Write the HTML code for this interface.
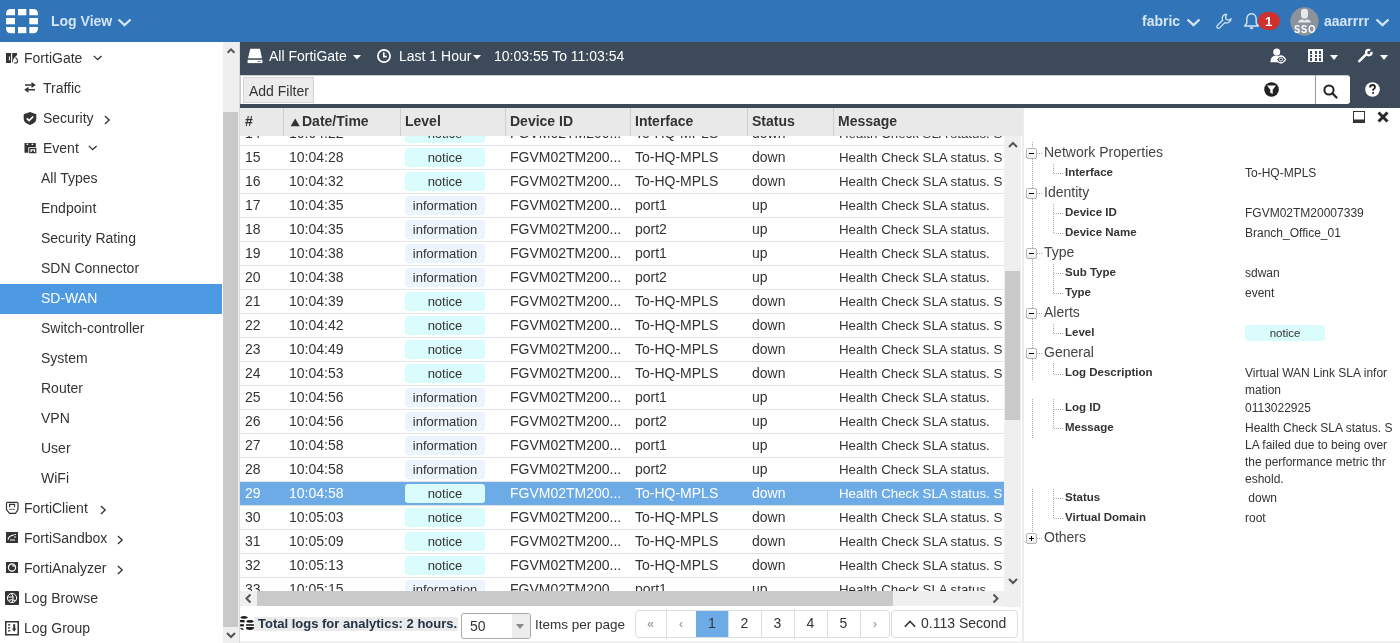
<!DOCTYPE html>
<html><head><meta charset="utf-8"><style>
html,body{margin:0;padding:0;width:1400px;height:643px;overflow:hidden;background:#fff;font-family:"Liberation Sans", sans-serif;-webkit-font-smoothing:antialiased;}
.t{will-change:transform;}
.r{position:absolute;}
.t{position:absolute;line-height:1;white-space:nowrap;font-family:"Liberation Sans", sans-serif;}
</style></head><body>
<div class="r" style="left:0px;top:0px;width:1400px;height:42px;background:#3174b7;"></div>
<svg class="r" style="left:6px;top:9px" width="33" height="25" viewBox="0 0 33 25">
<g fill="#fff">
<path d="M0 6.3 V5 Q0 0 5 0 H9 V6.3 Z"/>
<rect x="12" y="0" width="8.3" height="6.3"/>
<path d="M23.3 0 H27 Q32 0 32 5 V6.3 H23.3 Z"/>
<rect x="0" y="9" width="9" height="6.3"/>
<rect x="23.3" y="9" width="8.7" height="6.3"/>
<path d="M0 18 H9 V24.2 H5 Q0 24.2 0 19.2 Z"/>
<rect x="12" y="18" width="8.3" height="6.2"/>
<path d="M23.3 18 H32 V19.2 Q32 24.2 27 24.2 H23.3 Z"/>
</g></svg>
<div class="t" style="left:51px;top:14.15px;font-size:14px;color:#d3e4f5;font-weight:bold;">Log View</div>
<svg class="r" style="left:116.5px;top:18px" width="15" height="9" viewBox="0 0 15 9"><path d="M1.5 1.5 L7.5 7.2 L13.5 1.5" stroke="#d3e4f5" stroke-width="2.4" fill="none"/></svg>
<div class="t" style="left:1142px;top:14.15px;font-size:14px;color:#d3e4f5;font-weight:bold;">fabric</div>
<svg class="r" style="left:1185.5px;top:18px" width="15" height="9" viewBox="0 0 15 9"><path d="M1.5 1.5 L7.5 7.2 L13.5 1.5" stroke="#d3e4f5" stroke-width="2.4" fill="none"/></svg>
<svg class="r" style="left:1216px;top:13px" width="17" height="17" viewBox="0 0 17 17">
<path d="M10.5 1.2 A4.3 4.3 0 0 0 6.6 7.3 L1.3 12.6 A1.6 1.6 0 0 0 3.6 14.9 L8.9 9.6 A4.3 4.3 0 0 0 15 5.7 L12.6 7.2 L10.3 6.5 L9.6 4.2 Z" stroke="#d3e4f5" stroke-width="1.3" fill="none" stroke-linejoin="round"/></svg>
<svg class="r" style="left:1243px;top:12px" width="17" height="18" viewBox="0 0 17 18">
<path d="M8.5 1.8 C5.3 1.8 3.8 4.3 3.8 7.3 V11.3 L1.6 14 H15.4 L13.2 11.3 V7.3 C13.2 4.3 11.7 1.8 8.5 1.8 Z" stroke="#d3e4f5" stroke-width="1.4" fill="none" stroke-linejoin="round"/>
<path d="M6.5 15.3 A2 2 0 0 0 10.5 15.3 Z" fill="#d3e4f5"/></svg>
<div class="r" style="left:1258px;top:12px;width:22px;height:18px;background:#d0312f;border-radius:9px;"></div>
<div class="t" style="left:1265px;top:15.00px;font-size:13px;color:#fff;font-weight:bold;">1</div>
<svg class="r" style="left:1290px;top:7px" width="29" height="29" viewBox="0 0 29 29">
<circle cx="14.5" cy="14.5" r="14.2" fill="#8b939c"/>
<path d="M11 4.5 Q11 1.8 14.5 1.8 Q18 1.8 18 4.5 V8 Q18 11.8 14.5 11.8 Q11 11.8 11 8 Z" fill="#e6e8ea"/>
<path d="M8 15.5 Q8.5 13 12 12.3 L14.5 13.5 L17 12.3 Q20.5 13 21 15.5 Z" fill="#e6e8ea"/>
</svg>
<div class="t" style="left:1293.8px;top:23.57px;font-size:11.5px;color:#fff;font-weight:bold;letter-spacing:1.2px;transform:scaleX(0.8);transform-origin:0 0;">SSO</div>
<div class="t" style="left:1324px;top:14.15px;font-size:14px;color:#d3e4f5;font-weight:bold;">aaarrrr</div>
<svg class="r" style="left:1374.5px;top:18px" width="15" height="9" viewBox="0 0 15 9"><path d="M1.5 1.5 L7.5 7.2 L13.5 1.5" stroke="#d3e4f5" stroke-width="2.4" fill="none"/></svg>
<div class="r" style="left:0px;top:42px;width:223px;height:601px;background:#fff;"></div>
<div class="r" style="left:223px;top:42px;width:16px;height:601px;background:#efefef;"></div>
<div class="r" style="left:223px;top:112px;width:15px;height:515px;background:#c9c9c9;"></div>
<svg class="r" style="left:225px;top:46px" width="12" height="9" viewBox="0 0 12 9"><path d="M2.6 6.8 L6 3.4 L9.4 6.8" stroke="#555" stroke-width="2" fill="none"/></svg>
<svg class="r" style="left:225px;top:631px" width="12" height="9" viewBox="0 0 12 9"><path d="M2 2 L6 6 L10 2" stroke="#555" stroke-width="2" fill="none"/></svg>
<div class="r" style="left:0px;top:284px;width:222px;height:30px;background:#4d9ae2;"></div>
<div class="t" style="left:24px;top:51.00px;font-size:14px;color:#333;">FortiGate</div>
<svg class="r" style="left:93px;top:54.55px" width="10" height="6" viewBox="0 0 10 6"><path d="M0.8 0.9 L4.6 4.6 L8.6 0.9" stroke="#333" stroke-width="1.3" fill="none"/></svg>
<div class="t" style="left:42.5px;top:81.00px;font-size:14px;color:#333;">Traffic</div>
<div class="t" style="left:42.5px;top:111.00px;font-size:14px;color:#333;">Security</div>
<svg class="r" style="left:103.8px;top:114.55px" width="7" height="10" viewBox="0 0 7 10"><path d="M0.9 1.1 L5.2 5 L0.9 8.9" stroke="#333" stroke-width="1.3" fill="none"/></svg>
<div class="t" style="left:42.5px;top:141.00px;font-size:14px;color:#333;">Event</div>
<svg class="r" style="left:88px;top:144.54999999999998px" width="10" height="6" viewBox="0 0 10 6"><path d="M0.8 0.9 L4.6 4.6 L8.6 0.9" stroke="#333" stroke-width="1.3" fill="none"/></svg>
<div class="t" style="left:41px;top:171.00px;font-size:14px;color:#333;">All Types</div>
<div class="t" style="left:41px;top:201.00px;font-size:14px;color:#333;">Endpoint</div>
<div class="t" style="left:41px;top:231.00px;font-size:14px;color:#333;">Security Rating</div>
<div class="t" style="left:41px;top:261.00px;font-size:14px;color:#333;">SDN Connector</div>
<div class="t" style="left:41px;top:291.00px;font-size:14px;color:#fff;">SD-WAN</div>
<div class="t" style="left:41px;top:321.00px;font-size:14px;color:#333;">Switch-controller</div>
<div class="t" style="left:41px;top:351.00px;font-size:14px;color:#333;">System</div>
<div class="t" style="left:41px;top:381.00px;font-size:14px;color:#333;">Router</div>
<div class="t" style="left:41px;top:411.00px;font-size:14px;color:#333;">VPN</div>
<div class="t" style="left:41px;top:441.00px;font-size:14px;color:#333;">User</div>
<div class="t" style="left:41px;top:471.00px;font-size:14px;color:#333;">WiFi</div>
<div class="t" style="left:24.3px;top:501.00px;font-size:14px;color:#333;">FortiClient</div>
<svg class="r" style="left:100.3px;top:504.55px" width="7" height="10" viewBox="0 0 7 10"><path d="M0.9 1.1 L5.2 5 L0.9 8.9" stroke="#333" stroke-width="1.3" fill="none"/></svg>
<div class="t" style="left:24.3px;top:531.00px;font-size:14px;color:#333;">FortiSandbox</div>
<svg class="r" style="left:116.89999999999999px;top:534.5500000000001px" width="7" height="10" viewBox="0 0 7 10"><path d="M0.9 1.1 L5.2 5 L0.9 8.9" stroke="#333" stroke-width="1.3" fill="none"/></svg>
<div class="t" style="left:24.3px;top:561.00px;font-size:14px;color:#333;">FortiAnalyzer</div>
<svg class="r" style="left:117.3px;top:564.5500000000001px" width="7" height="10" viewBox="0 0 7 10"><path d="M0.9 1.1 L5.2 5 L0.9 8.9" stroke="#333" stroke-width="1.3" fill="none"/></svg>
<div class="t" style="left:24.3px;top:591.00px;font-size:14px;color:#333;">Log Browse</div>
<div class="t" style="left:24.3px;top:621.00px;font-size:14px;color:#333;">Log Group</div>
<svg class="r" style="left:5px;top:52px" width="15" height="12" viewBox="0 0 15 12"><path d="M1 1 H6 V11 H1 Z M3.9 4.4 V8.2 H5 V4.4 Z" fill="#333" fill-rule="evenodd"/><path d="M7.2 1 H12 V3 L9.5 5.5 Q7.8 7.5 8.2 9.5 L7.2 11 Z" fill="#333"/><path d="M10.5 5.5 Q13 7.5 12.5 10 Q11 11.5 9 10.8" stroke="#333" stroke-width="1.1" fill="none"/></svg>
<svg class="r" style="left:24px;top:82px" width="12" height="11" viewBox="0 0 12 11"><path d="M1 3 H10 M7.5 0.8 L10.5 3 L7.5 5.2" stroke="#333" stroke-width="1.5" fill="none"/><path d="M11 7.8 H2 M4.5 5.6 L1.5 7.8 L4.5 10" stroke="#333" stroke-width="1.5" fill="none"/></svg>
<svg class="r" style="left:23px;top:112px" width="14" height="13" viewBox="0 0 14 13"><path d="M7 0 L13.3 2.3 V7 Q13.3 10.8 7 13 Q0.7 10.8 0.7 7 V2.3 Z" fill="#333"/><path d="M3.8 6.3 L6.1 8.6 L10.2 4.5" stroke="#fff" stroke-width="1.7" fill="none"/></svg>
<svg class="r" style="left:24px;top:142px" width="13" height="12" viewBox="0 0 13 12"><path d="M0.5 1 H11.8 V5.3 H4.3 V10.8 H0.5 Z" fill="#333"/><rect x="2.6" y="1.6" width="1.6" height="1.4" fill="#fff"/><rect x="7.6" y="1.6" width="1.6" height="1.4" fill="#fff"/><rect x="5.8" y="6.6" width="5.9" height="4" fill="none" stroke="#333" stroke-width="1.3"/><rect x="7.8" y="8.4" width="2" height="1.6" fill="#333"/></svg>
<svg class="r" style="left:5px;top:501px" width="14" height="14" viewBox="0 0 14 14"><path d="M2 1.3 H12 L13 2.3 V8.5 L10.5 12.3 H4.5 L1.5 8.5 V2.3 Z" fill="none" stroke="#333" stroke-width="1.2"/><path d="M4.6 6.2 V3.4 H9.5 V6.2" stroke="#333" stroke-width="1.2" fill="none"/><path d="M4.3 8.4 H9.8" stroke="#333" stroke-width="1.1" stroke-dasharray="1.2 0.8"/></svg>
<svg class="r" style="left:6px;top:532px" width="12" height="11" viewBox="0 0 12 11"><rect x="0" y="0" width="12" height="11" fill="#333"/><path d="M2 7.7 Q3 3.5 8 3 M8.5 2.5 H10 M4 8 H9 M8 5 H10" stroke="#fff" stroke-width="1.2" fill="none"/></svg>
<svg class="r" style="left:6px;top:562px" width="12" height="11" viewBox="0 0 12 11"><rect x="0" y="0" width="12" height="11" fill="#333"/><circle cx="6" cy="5.5" r="3.6" stroke="#fff" stroke-width="1.2" fill="none"/><path d="M6 4 Q8 3.3 8.4 4.8" stroke="#fff" stroke-width="1.1" fill="none"/></svg>
<svg class="r" style="left:5px;top:591px" width="14" height="14" viewBox="0 0 14 14"><rect x="0" y="0" width="14" height="14" rx="1" fill="#333"/><circle cx="7" cy="7" r="4.6" stroke="#fff" stroke-width="1" fill="none"/><path d="M2.6 6 H8.5 M3.5 9.3 Q6 8 10.5 9.5 M6 2.7 Q9.5 5 7 11.4" stroke="#fff" stroke-width="1" fill="none"/></svg>
<svg class="r" style="left:5px;top:621px" width="14" height="15" viewBox="0 0 14 15"><rect x="0.75" y="0.75" width="12.5" height="13" fill="none" stroke="#333" stroke-width="1.5"/><path d="M3 3.8 H5.3 M3 6.8 H5.3 M3 9.8 H5.3" stroke="#333" stroke-width="1.2"/><path d="M8.2 3.3 H10.2 V7.5 H11.5 L9.2 10.8 L6.9 7.5 H8.2 Z" fill="#333"/></svg>
<div class="r" style="left:240px;top:42px;width:1160px;height:66px;background:#3c4a5a;"></div>
<svg class="r" style="left:247px;top:48px" width="16" height="16" viewBox="0 0 16 16">
<path d="M3.3 0.8 H13 L15 10.3 H1 Z" fill="#fff"/><rect x="0.6" y="11.8" width="14.8" height="3.3" fill="#fff"/><rect x="10.5" y="12.9" width="3.2" height="1" fill="#6a7a9a"/></svg>
<div class="t" style="left:269px;top:49.15px;font-size:14px;color:#fff;">All FortiGate</div>
<svg class="r" style="left:353px;top:55px" width="8" height="5" viewBox="0 0 8 5"><path d="M0 0 H8 L4 4.5 Z" fill="#fff"/></svg>
<svg class="r" style="left:377px;top:49px" width="14" height="14" viewBox="0 0 14 14">
<circle cx="7" cy="7" r="6.1" stroke="#fff" stroke-width="1.7" fill="none"/><path d="M6.8 3.3 V7.6 H9.8" stroke="#fff" stroke-width="1.6" fill="none"/></svg>
<div class="t" style="left:398.5px;top:49.15px;font-size:14px;color:#fff;">Last 1 Hour</div>
<svg class="r" style="left:473px;top:55px" width="8" height="5" viewBox="0 0 8 5"><path d="M0 0 H8 L4 4.5 Z" fill="#fff"/></svg>
<div class="t" style="left:494px;top:49.15px;font-size:14px;color:#fff;">10:03:55 To 11:03:54</div>
<svg class="r" style="left:1270px;top:48px" width="17" height="17" viewBox="0 0 17 17">
<circle cx="6.7" cy="3.9" r="3.5" fill="#fff"/><path d="M0.3 14.3 Q0.3 8 6 7.6 Q8 7.6 9.3 8.4 L6 11.5 L8.3 14.3 Z" fill="#fff"/>
<path d="M6.4 11.5 Q8.5 8 11 8 Q13.5 8 15.6 11.5 Q13.5 15 11 15 Q8.5 15 6.4 11.5 Z" fill="#3c4a5a" stroke="#fff" stroke-width="1.3"/><circle cx="11" cy="11.5" r="1.6" fill="none" stroke="#fff" stroke-width="0.9"/></svg>
<svg class="r" style="left:1308px;top:49px" width="15" height="13" viewBox="0 0 15 13" shape-rendering="crispEdges">
<rect x="0" y="0" width="15" height="13" fill="#fff"/><g fill="#3c4a5a"><rect x="2" y="2" width="2" height="3"/><rect x="7" y="2" width="2" height="3"/><rect x="11" y="2" width="2" height="3"/><rect x="2" y="6" width="2" height="2"/><rect x="7" y="6" width="2" height="2"/><rect x="11" y="6" width="2" height="2"/><rect x="2" y="9" width="2" height="3"/><rect x="7" y="9" width="2" height="3"/><rect x="11" y="9" width="2" height="3"/></g></svg>
<svg class="r" style="left:1330px;top:55px" width="8" height="5" viewBox="0 0 8 5"><path d="M0 0 H8 L4 5 Z" fill="#fff"/></svg>
<svg class="r" style="left:1357px;top:48px" width="17" height="17" viewBox="0 0 17 17">
<path d="M2.3 13.2 L8.8 6.7" stroke="#fff" stroke-width="2.6" stroke-linecap="round"/>
<circle cx="11.8" cy="4.6" r="2.7" stroke="#fff" stroke-width="2.3" fill="none"/>
<path d="M11.6 4.8 L14.2 0.2 L17 3 Z" fill="#3c4a5a"/></svg>
<svg class="r" style="left:1380px;top:55px" width="8" height="5" viewBox="0 0 8 5"><path d="M0 0 H8 L4 5 Z" fill="#fff"/></svg>
<div class="r" style="left:240px;top:75px;width:1110px;height:29px;background:#fff;border:1px solid #c9ccd0;border-right:none;border-bottom:none;box-sizing:border-box;border-radius:0 3px 3px 0"></div>
<div class="r" style="left:1315px;top:75px;width:1px;height:29px;background:#999;"></div>
<div class="r" style="left:243px;top:77px;width:69px;height:24px;background:#ececec;border:1px solid #d4d4d4;"></div>
<div class="t" style="left:248.5px;top:84.15px;font-size:14px;color:#333;">Add Filter</div>
<svg class="r" style="left:1264px;top:82px" width="15" height="15" viewBox="0 0 15 15">
<circle cx="7.5" cy="7.5" r="7.3" fill="#222"/><path d="M3 3.5 H12 L8.7 7.8 V12 L6.3 10.8 V7.8 Z" fill="#fff"/></svg>
<svg class="r" style="left:1323px;top:84px" width="15" height="15" viewBox="0 0 15 15">
<circle cx="6" cy="6" r="4.6" stroke="#222" stroke-width="2" fill="none"/><path d="M9.3 9.3 L13.5 13.5" stroke="#222" stroke-width="2.2" stroke-linecap="round"/></svg>
<svg class="r" style="left:1365px;top:82px" width="15" height="15" viewBox="0 0 15 15">
<circle cx="7.5" cy="7.5" r="7.3" fill="#fff"/><path d="M5 5.5 Q5 3 7.5 3 Q10 3 10 5.3 Q10 6.8 8.2 7.5 V8.8" stroke="#222" stroke-width="1.8" fill="none"/><rect x="7.2" y="10" width="1.8" height="1.8" fill="#222"/></svg>
<div class="r" style="left:240px;top:108px;width:782px;height:535px;background:#fff;"></div>
<div class="r" style="left:239px;top:42px;width:1px;height:601px;background:#dcdcdc;"></div>
<div class="r" style="left:240px;top:136px;width:764px;height:455px;overflow:hidden">
<div class="r" style="left:0;top:-14px;width:764px;height:24px;background:#fff;border-bottom:1px solid #e3e3e3;box-sizing:border-box"></div>
<div class="t" style="left:4.5px;top:-9.85px;font-size:14px;color:#333">14</div>
<div class="t" style="left:48.5px;top:-9.85px;font-size:14px;color:#333">10:04:22</div>
<div class="r" style="left:165px;top:-12px;width:80px;height:19px;background:#dbfcfc;border-radius:3px"></div>
<div class="t" style="left:165px;width:80px;text-align:center;top:-9.00px;font-size:13px;color:#333">notice</div>
<div class="t" style="left:270px;top:-9.85px;font-size:14px;color:#333">FGVM02TM200...</div>
<div class="t" style="left:395px;top:-9.85px;font-size:14px;color:#333">To-HQ-MPLS</div>
<div class="t" style="left:512px;top:-9.85px;font-size:14px;color:#333">down</div>
<div class="t" style="left:598.5px;top:-9.26px;font-size:13.3px;color:#333">Health Check SLA status. S</div>
<div class="r" style="left:0;top:10px;width:764px;height:24px;background:#fff;border-bottom:1px solid #e3e3e3;box-sizing:border-box"></div>
<div class="t" style="left:4.5px;top:14.15px;font-size:14px;color:#333">15</div>
<div class="t" style="left:48.5px;top:14.15px;font-size:14px;color:#333">10:04:28</div>
<div class="r" style="left:165px;top:12px;width:80px;height:19px;background:#dbfcfc;border-radius:3px"></div>
<div class="t" style="left:165px;width:80px;text-align:center;top:15.00px;font-size:13px;color:#333">notice</div>
<div class="t" style="left:270px;top:14.15px;font-size:14px;color:#333">FGVM02TM200...</div>
<div class="t" style="left:395px;top:14.15px;font-size:14px;color:#333">To-HQ-MPLS</div>
<div class="t" style="left:512px;top:14.15px;font-size:14px;color:#333">down</div>
<div class="t" style="left:598.5px;top:14.74px;font-size:13.3px;color:#333">Health Check SLA status. S</div>
<div class="r" style="left:0;top:34px;width:764px;height:24px;background:#fff;border-bottom:1px solid #e3e3e3;box-sizing:border-box"></div>
<div class="t" style="left:4.5px;top:38.15px;font-size:14px;color:#333">16</div>
<div class="t" style="left:48.5px;top:38.15px;font-size:14px;color:#333">10:04:32</div>
<div class="r" style="left:165px;top:36px;width:80px;height:19px;background:#dbfcfc;border-radius:3px"></div>
<div class="t" style="left:165px;width:80px;text-align:center;top:39.00px;font-size:13px;color:#333">notice</div>
<div class="t" style="left:270px;top:38.15px;font-size:14px;color:#333">FGVM02TM200...</div>
<div class="t" style="left:395px;top:38.15px;font-size:14px;color:#333">To-HQ-MPLS</div>
<div class="t" style="left:512px;top:38.15px;font-size:14px;color:#333">down</div>
<div class="t" style="left:598.5px;top:38.74px;font-size:13.3px;color:#333">Health Check SLA status. S</div>
<div class="r" style="left:0;top:58px;width:764px;height:24px;background:#fff;border-bottom:1px solid #e3e3e3;box-sizing:border-box"></div>
<div class="t" style="left:4.5px;top:62.15px;font-size:14px;color:#333">17</div>
<div class="t" style="left:48.5px;top:62.15px;font-size:14px;color:#333">10:04:35</div>
<div class="r" style="left:165px;top:60px;width:80px;height:19px;background:#ecf4fd;border-radius:3px"></div>
<div class="t" style="left:165px;width:80px;text-align:center;top:63.00px;font-size:13px;color:#333">information</div>
<div class="t" style="left:270px;top:62.15px;font-size:14px;color:#333">FGVM02TM200...</div>
<div class="t" style="left:395px;top:62.15px;font-size:14px;color:#333">port1</div>
<div class="t" style="left:512px;top:62.15px;font-size:14px;color:#333">up</div>
<div class="t" style="left:598.5px;top:62.74px;font-size:13.3px;color:#333">Health Check SLA status.</div>
<div class="r" style="left:0;top:82px;width:764px;height:24px;background:#fff;border-bottom:1px solid #e3e3e3;box-sizing:border-box"></div>
<div class="t" style="left:4.5px;top:86.15px;font-size:14px;color:#333">18</div>
<div class="t" style="left:48.5px;top:86.15px;font-size:14px;color:#333">10:04:35</div>
<div class="r" style="left:165px;top:84px;width:80px;height:19px;background:#ecf4fd;border-radius:3px"></div>
<div class="t" style="left:165px;width:80px;text-align:center;top:87.00px;font-size:13px;color:#333">information</div>
<div class="t" style="left:270px;top:86.15px;font-size:14px;color:#333">FGVM02TM200...</div>
<div class="t" style="left:395px;top:86.15px;font-size:14px;color:#333">port2</div>
<div class="t" style="left:512px;top:86.15px;font-size:14px;color:#333">up</div>
<div class="t" style="left:598.5px;top:86.74px;font-size:13.3px;color:#333">Health Check SLA status.</div>
<div class="r" style="left:0;top:106px;width:764px;height:24px;background:#fff;border-bottom:1px solid #e3e3e3;box-sizing:border-box"></div>
<div class="t" style="left:4.5px;top:110.15px;font-size:14px;color:#333">19</div>
<div class="t" style="left:48.5px;top:110.15px;font-size:14px;color:#333">10:04:38</div>
<div class="r" style="left:165px;top:108px;width:80px;height:19px;background:#ecf4fd;border-radius:3px"></div>
<div class="t" style="left:165px;width:80px;text-align:center;top:111.00px;font-size:13px;color:#333">information</div>
<div class="t" style="left:270px;top:110.15px;font-size:14px;color:#333">FGVM02TM200...</div>
<div class="t" style="left:395px;top:110.15px;font-size:14px;color:#333">port1</div>
<div class="t" style="left:512px;top:110.15px;font-size:14px;color:#333">up</div>
<div class="t" style="left:598.5px;top:110.74px;font-size:13.3px;color:#333">Health Check SLA status.</div>
<div class="r" style="left:0;top:130px;width:764px;height:24px;background:#fff;border-bottom:1px solid #e3e3e3;box-sizing:border-box"></div>
<div class="t" style="left:4.5px;top:134.15px;font-size:14px;color:#333">20</div>
<div class="t" style="left:48.5px;top:134.15px;font-size:14px;color:#333">10:04:38</div>
<div class="r" style="left:165px;top:132px;width:80px;height:19px;background:#ecf4fd;border-radius:3px"></div>
<div class="t" style="left:165px;width:80px;text-align:center;top:135.00px;font-size:13px;color:#333">information</div>
<div class="t" style="left:270px;top:134.15px;font-size:14px;color:#333">FGVM02TM200...</div>
<div class="t" style="left:395px;top:134.15px;font-size:14px;color:#333">port2</div>
<div class="t" style="left:512px;top:134.15px;font-size:14px;color:#333">up</div>
<div class="t" style="left:598.5px;top:134.74px;font-size:13.3px;color:#333">Health Check SLA status.</div>
<div class="r" style="left:0;top:154px;width:764px;height:24px;background:#fff;border-bottom:1px solid #e3e3e3;box-sizing:border-box"></div>
<div class="t" style="left:4.5px;top:158.15px;font-size:14px;color:#333">21</div>
<div class="t" style="left:48.5px;top:158.15px;font-size:14px;color:#333">10:04:39</div>
<div class="r" style="left:165px;top:156px;width:80px;height:19px;background:#dbfcfc;border-radius:3px"></div>
<div class="t" style="left:165px;width:80px;text-align:center;top:159.00px;font-size:13px;color:#333">notice</div>
<div class="t" style="left:270px;top:158.15px;font-size:14px;color:#333">FGVM02TM200...</div>
<div class="t" style="left:395px;top:158.15px;font-size:14px;color:#333">To-HQ-MPLS</div>
<div class="t" style="left:512px;top:158.15px;font-size:14px;color:#333">down</div>
<div class="t" style="left:598.5px;top:158.74px;font-size:13.3px;color:#333">Health Check SLA status. S</div>
<div class="r" style="left:0;top:178px;width:764px;height:24px;background:#fff;border-bottom:1px solid #e3e3e3;box-sizing:border-box"></div>
<div class="t" style="left:4.5px;top:182.15px;font-size:14px;color:#333">22</div>
<div class="t" style="left:48.5px;top:182.15px;font-size:14px;color:#333">10:04:42</div>
<div class="r" style="left:165px;top:180px;width:80px;height:19px;background:#dbfcfc;border-radius:3px"></div>
<div class="t" style="left:165px;width:80px;text-align:center;top:183.00px;font-size:13px;color:#333">notice</div>
<div class="t" style="left:270px;top:182.15px;font-size:14px;color:#333">FGVM02TM200...</div>
<div class="t" style="left:395px;top:182.15px;font-size:14px;color:#333">To-HQ-MPLS</div>
<div class="t" style="left:512px;top:182.15px;font-size:14px;color:#333">down</div>
<div class="t" style="left:598.5px;top:182.74px;font-size:13.3px;color:#333">Health Check SLA status. S</div>
<div class="r" style="left:0;top:202px;width:764px;height:24px;background:#fff;border-bottom:1px solid #e3e3e3;box-sizing:border-box"></div>
<div class="t" style="left:4.5px;top:206.15px;font-size:14px;color:#333">23</div>
<div class="t" style="left:48.5px;top:206.15px;font-size:14px;color:#333">10:04:49</div>
<div class="r" style="left:165px;top:204px;width:80px;height:19px;background:#dbfcfc;border-radius:3px"></div>
<div class="t" style="left:165px;width:80px;text-align:center;top:207.00px;font-size:13px;color:#333">notice</div>
<div class="t" style="left:270px;top:206.15px;font-size:14px;color:#333">FGVM02TM200...</div>
<div class="t" style="left:395px;top:206.15px;font-size:14px;color:#333">To-HQ-MPLS</div>
<div class="t" style="left:512px;top:206.15px;font-size:14px;color:#333">down</div>
<div class="t" style="left:598.5px;top:206.74px;font-size:13.3px;color:#333">Health Check SLA status. S</div>
<div class="r" style="left:0;top:226px;width:764px;height:24px;background:#fff;border-bottom:1px solid #e3e3e3;box-sizing:border-box"></div>
<div class="t" style="left:4.5px;top:230.15px;font-size:14px;color:#333">24</div>
<div class="t" style="left:48.5px;top:230.15px;font-size:14px;color:#333">10:04:53</div>
<div class="r" style="left:165px;top:228px;width:80px;height:19px;background:#dbfcfc;border-radius:3px"></div>
<div class="t" style="left:165px;width:80px;text-align:center;top:231.00px;font-size:13px;color:#333">notice</div>
<div class="t" style="left:270px;top:230.15px;font-size:14px;color:#333">FGVM02TM200...</div>
<div class="t" style="left:395px;top:230.15px;font-size:14px;color:#333">To-HQ-MPLS</div>
<div class="t" style="left:512px;top:230.15px;font-size:14px;color:#333">down</div>
<div class="t" style="left:598.5px;top:230.74px;font-size:13.3px;color:#333">Health Check SLA status. S</div>
<div class="r" style="left:0;top:250px;width:764px;height:24px;background:#fff;border-bottom:1px solid #e3e3e3;box-sizing:border-box"></div>
<div class="t" style="left:4.5px;top:254.15px;font-size:14px;color:#333">25</div>
<div class="t" style="left:48.5px;top:254.15px;font-size:14px;color:#333">10:04:56</div>
<div class="r" style="left:165px;top:252px;width:80px;height:19px;background:#ecf4fd;border-radius:3px"></div>
<div class="t" style="left:165px;width:80px;text-align:center;top:255.00px;font-size:13px;color:#333">information</div>
<div class="t" style="left:270px;top:254.15px;font-size:14px;color:#333">FGVM02TM200...</div>
<div class="t" style="left:395px;top:254.15px;font-size:14px;color:#333">port1</div>
<div class="t" style="left:512px;top:254.15px;font-size:14px;color:#333">up</div>
<div class="t" style="left:598.5px;top:254.74px;font-size:13.3px;color:#333">Health Check SLA status.</div>
<div class="r" style="left:0;top:274px;width:764px;height:24px;background:#fff;border-bottom:1px solid #e3e3e3;box-sizing:border-box"></div>
<div class="t" style="left:4.5px;top:278.15px;font-size:14px;color:#333">26</div>
<div class="t" style="left:48.5px;top:278.15px;font-size:14px;color:#333">10:04:56</div>
<div class="r" style="left:165px;top:276px;width:80px;height:19px;background:#ecf4fd;border-radius:3px"></div>
<div class="t" style="left:165px;width:80px;text-align:center;top:279.00px;font-size:13px;color:#333">information</div>
<div class="t" style="left:270px;top:278.15px;font-size:14px;color:#333">FGVM02TM200...</div>
<div class="t" style="left:395px;top:278.15px;font-size:14px;color:#333">port2</div>
<div class="t" style="left:512px;top:278.15px;font-size:14px;color:#333">up</div>
<div class="t" style="left:598.5px;top:278.74px;font-size:13.3px;color:#333">Health Check SLA status.</div>
<div class="r" style="left:0;top:298px;width:764px;height:24px;background:#fff;border-bottom:1px solid #e3e3e3;box-sizing:border-box"></div>
<div class="t" style="left:4.5px;top:302.15px;font-size:14px;color:#333">27</div>
<div class="t" style="left:48.5px;top:302.15px;font-size:14px;color:#333">10:04:58</div>
<div class="r" style="left:165px;top:300px;width:80px;height:19px;background:#ecf4fd;border-radius:3px"></div>
<div class="t" style="left:165px;width:80px;text-align:center;top:303.00px;font-size:13px;color:#333">information</div>
<div class="t" style="left:270px;top:302.15px;font-size:14px;color:#333">FGVM02TM200...</div>
<div class="t" style="left:395px;top:302.15px;font-size:14px;color:#333">port1</div>
<div class="t" style="left:512px;top:302.15px;font-size:14px;color:#333">up</div>
<div class="t" style="left:598.5px;top:302.74px;font-size:13.3px;color:#333">Health Check SLA status.</div>
<div class="r" style="left:0;top:322px;width:764px;height:24px;background:#fff;border-bottom:1px solid #e3e3e3;box-sizing:border-box"></div>
<div class="t" style="left:4.5px;top:326.15px;font-size:14px;color:#333">28</div>
<div class="t" style="left:48.5px;top:326.15px;font-size:14px;color:#333">10:04:58</div>
<div class="r" style="left:165px;top:324px;width:80px;height:19px;background:#ecf4fd;border-radius:3px"></div>
<div class="t" style="left:165px;width:80px;text-align:center;top:327.00px;font-size:13px;color:#333">information</div>
<div class="t" style="left:270px;top:326.15px;font-size:14px;color:#333">FGVM02TM200...</div>
<div class="t" style="left:395px;top:326.15px;font-size:14px;color:#333">port2</div>
<div class="t" style="left:512px;top:326.15px;font-size:14px;color:#333">up</div>
<div class="t" style="left:598.5px;top:326.74px;font-size:13.3px;color:#333">Health Check SLA status.</div>
<div class="r" style="left:0;top:346px;width:764px;height:24px;background:#6cabe6;border-bottom:1px solid #e3e3e3;box-sizing:border-box"></div>
<div class="t" style="left:4.5px;top:350.15px;font-size:14px;color:#fff">29</div>
<div class="t" style="left:48.5px;top:350.15px;font-size:14px;color:#fff">10:04:58</div>
<div class="r" style="left:165px;top:348px;width:80px;height:19px;background:#dbfcfc;border-radius:3px"></div>
<div class="t" style="left:165px;width:80px;text-align:center;top:351.00px;font-size:13px;color:#333">notice</div>
<div class="t" style="left:270px;top:350.15px;font-size:14px;color:#fff">FGVM02TM200...</div>
<div class="t" style="left:395px;top:350.15px;font-size:14px;color:#fff">To-HQ-MPLS</div>
<div class="t" style="left:512px;top:350.15px;font-size:14px;color:#fff">down</div>
<div class="t" style="left:598.5px;top:350.74px;font-size:13.3px;color:#fff">Health Check SLA status. S</div>
<div class="r" style="left:0;top:370px;width:764px;height:24px;background:#fff;border-bottom:1px solid #e3e3e3;box-sizing:border-box"></div>
<div class="t" style="left:4.5px;top:374.15px;font-size:14px;color:#333">30</div>
<div class="t" style="left:48.5px;top:374.15px;font-size:14px;color:#333">10:05:03</div>
<div class="r" style="left:165px;top:372px;width:80px;height:19px;background:#dbfcfc;border-radius:3px"></div>
<div class="t" style="left:165px;width:80px;text-align:center;top:375.00px;font-size:13px;color:#333">notice</div>
<div class="t" style="left:270px;top:374.15px;font-size:14px;color:#333">FGVM02TM200...</div>
<div class="t" style="left:395px;top:374.15px;font-size:14px;color:#333">To-HQ-MPLS</div>
<div class="t" style="left:512px;top:374.15px;font-size:14px;color:#333">down</div>
<div class="t" style="left:598.5px;top:374.74px;font-size:13.3px;color:#333">Health Check SLA status. S</div>
<div class="r" style="left:0;top:394px;width:764px;height:24px;background:#fff;border-bottom:1px solid #e3e3e3;box-sizing:border-box"></div>
<div class="t" style="left:4.5px;top:398.15px;font-size:14px;color:#333">31</div>
<div class="t" style="left:48.5px;top:398.15px;font-size:14px;color:#333">10:05:09</div>
<div class="r" style="left:165px;top:396px;width:80px;height:19px;background:#dbfcfc;border-radius:3px"></div>
<div class="t" style="left:165px;width:80px;text-align:center;top:399.00px;font-size:13px;color:#333">notice</div>
<div class="t" style="left:270px;top:398.15px;font-size:14px;color:#333">FGVM02TM200...</div>
<div class="t" style="left:395px;top:398.15px;font-size:14px;color:#333">To-HQ-MPLS</div>
<div class="t" style="left:512px;top:398.15px;font-size:14px;color:#333">down</div>
<div class="t" style="left:598.5px;top:398.74px;font-size:13.3px;color:#333">Health Check SLA status. S</div>
<div class="r" style="left:0;top:418px;width:764px;height:24px;background:#fff;border-bottom:1px solid #e3e3e3;box-sizing:border-box"></div>
<div class="t" style="left:4.5px;top:422.15px;font-size:14px;color:#333">32</div>
<div class="t" style="left:48.5px;top:422.15px;font-size:14px;color:#333">10:05:13</div>
<div class="r" style="left:165px;top:420px;width:80px;height:19px;background:#dbfcfc;border-radius:3px"></div>
<div class="t" style="left:165px;width:80px;text-align:center;top:423.00px;font-size:13px;color:#333">notice</div>
<div class="t" style="left:270px;top:422.15px;font-size:14px;color:#333">FGVM02TM200...</div>
<div class="t" style="left:395px;top:422.15px;font-size:14px;color:#333">To-HQ-MPLS</div>
<div class="t" style="left:512px;top:422.15px;font-size:14px;color:#333">down</div>
<div class="t" style="left:598.5px;top:422.74px;font-size:13.3px;color:#333">Health Check SLA status. S</div>
<div class="r" style="left:0;top:442px;width:764px;height:24px;background:#fff;border-bottom:1px solid #e3e3e3;box-sizing:border-box"></div>
<div class="t" style="left:4.5px;top:446.15px;font-size:14px;color:#333">33</div>
<div class="t" style="left:48.5px;top:446.15px;font-size:14px;color:#333">10:05:15</div>
<div class="r" style="left:165px;top:444px;width:80px;height:19px;background:#ecf4fd;border-radius:3px"></div>
<div class="t" style="left:165px;width:80px;text-align:center;top:447.00px;font-size:13px;color:#333">information</div>
<div class="t" style="left:270px;top:446.15px;font-size:14px;color:#333">FGVM02TM200...</div>
<div class="t" style="left:395px;top:446.15px;font-size:14px;color:#333">port1</div>
<div class="t" style="left:512px;top:446.15px;font-size:14px;color:#333">up</div>
<div class="t" style="left:598.5px;top:446.74px;font-size:13.3px;color:#333">Health Check SLA status.</div>
</div>
<div class="r" style="left:240px;top:108px;width:782px;height:28px;background:#e9e9e9;"></div>
<div class="r" style="left:283px;top:108px;width:1px;height:28px;background:#cfcfcf;"></div>
<div class="r" style="left:400px;top:108px;width:1px;height:28px;background:#cfcfcf;"></div>
<div class="r" style="left:505px;top:108px;width:1px;height:28px;background:#cfcfcf;"></div>
<div class="r" style="left:630px;top:108px;width:1px;height:28px;background:#cfcfcf;"></div>
<div class="r" style="left:747px;top:108px;width:1px;height:28px;background:#cfcfcf;"></div>
<div class="r" style="left:833px;top:108px;width:1px;height:28px;background:#cfcfcf;"></div>
<div class="t" style="left:244.5px;top:113.95px;font-size:14px;color:#333;font-weight:bold;">#</div>
<div class="t" style="left:302px;top:113.95px;font-size:14px;color:#333;font-weight:bold;">Date/Time</div>
<div class="t" style="left:405px;top:113.95px;font-size:14px;color:#333;font-weight:bold;">Level</div>
<div class="t" style="left:510px;top:113.95px;font-size:14px;color:#333;font-weight:bold;">Device ID</div>
<div class="t" style="left:635px;top:113.95px;font-size:14px;color:#333;font-weight:bold;">Interface</div>
<div class="t" style="left:752px;top:113.95px;font-size:14px;color:#333;font-weight:bold;">Status</div>
<div class="t" style="left:838px;top:113.95px;font-size:14px;color:#333;font-weight:bold;">Message</div>
<svg class="r" style="left:290px;top:118px" width="11" height="9" viewBox="0 0 11 9"><path d="M5.2 0.6 L9.8 8.3 H0.6 Z" fill="#333"/></svg>
<div class="r" style="left:1004px;top:136px;width:17px;height:471px;background:#efefef;"></div>
<div class="r" style="left:1005px;top:271px;width:15px;height:149px;background:#c9c9c9;"></div>
<svg class="r" style="left:1007px;top:140px" width="12" height="9" viewBox="0 0 12 9"><path d="M2 7 L6 3 L10 7" stroke="#555" stroke-width="2" fill="none"/></svg>
<svg class="r" style="left:1007px;top:577px" width="12" height="9" viewBox="0 0 12 9"><path d="M2 2 L6 6 L10 2" stroke="#555" stroke-width="2" fill="none"/></svg>
<div class="r" style="left:240px;top:591px;width:764px;height:15px;background:#efefef;"></div>
<div class="r" style="left:257px;top:591px;width:636px;height:15px;background:#c9c9c9;"></div>
<svg class="r" style="left:244px;top:593px" width="9" height="11" viewBox="0 0 9 11"><path d="M6.5 1.5 L2.5 5.5 L6.5 9.5" stroke="#555" stroke-width="2" fill="none"/></svg>
<svg class="r" style="left:991px;top:593px" width="9" height="11" viewBox="0 0 9 11"><path d="M2.5 1.5 L6.5 5.5 L2.5 9.5" stroke="#555" stroke-width="2" fill="none"/></svg>
<svg class="r" style="left:240px;top:615px" width="15" height="16" viewBox="0 0 15 16">
<g fill="#1a1a1a"><path d="M0.2 2.4 Q1 0.9 4 0.9 Q7 0.9 8 2.4 Q7 3.8 4 3.8 Q1 3.8 0.2 2.4 Z"/>
<rect x="0.1" y="5" width="4.5" height="2.3"/><rect x="0.1" y="9.2" width="3.8" height="2.2"/><path d="M0.1 13 L2 13 L3.8 14.2 V14.8 H1.5 Z"/>
<path d="M6.1 6.4 Q7 5.1 10 5.1 Q13 5.1 13.9 6.4 Q13 7.7 10 7.7 Q7 7.7 6.1 6.4 Z"/>
<rect x="6.1" y="9.2" width="7.8" height="1.6"/><path d="M6.1 12 H13.9 V13.2 Q13.6 14.9 10 14.9 Q6.4 14.9 6.1 13.2 Z"/></g></svg>
<div class="r" style="left:254px;top:617px;width:204px;height:14px;background:#ebebeb;"></div>
<div class="t" style="left:257.5px;top:617.00px;font-size:13px;color:#233447;font-weight:bold;">Total logs for analytics: 2 hours.</div>
<div class="r" style="left:461px;top:613px;width:68px;height:24px;border:1px solid #a9a9a9;border-radius:3px;background:#fff;overflow:hidden"><div class="r" style="left:50px;top:0;width:18px;height:24px;background:#ededed"></div></div>
<svg class="r" style="left:516px;top:624px" width="8" height="5" viewBox="0 0 8 5"><path d="M0 0 H8 L4 5 Z" fill="#888"/></svg>
<div class="t" style="left:470px;top:619.15px;font-size:14px;color:#333;">50</div>
<div class="t" style="left:534.5px;top:617.57px;font-size:13.5px;color:#333;">Items per page</div>
<div class="r" style="left:635px;top:610px;width:255px;height:28px;border:1px solid #dcdcdc;border-radius:4px;box-sizing:border-box;background:#fff"></div>
<div class="t" style="left:635px;width:31px;text-align:center;top:617.84px;font-size:12px;color:#888">&laquo;</div>
<div class="r" style="left:666px;top:611px;width:1px;height:26px;background:#dcdcdc;"></div>
<div class="t" style="left:666px;width:30px;text-align:center;top:617.84px;font-size:12px;color:#888">&lsaquo;</div>
<div class="r" style="left:696px;top:611px;width:32px;height:26px;background:#6cabe6;"></div>
<div class="t" style="left:696px;width:32px;text-align:center;top:616.15px;font-size:14px;color:#333">1</div>
<div class="r" style="left:728px;top:611px;width:1px;height:26px;background:#dcdcdc;"></div>
<div class="t" style="left:728px;width:33px;text-align:center;top:616.15px;font-size:14px;color:#333">2</div>
<div class="r" style="left:761px;top:611px;width:1px;height:26px;background:#dcdcdc;"></div>
<div class="t" style="left:761px;width:33px;text-align:center;top:616.15px;font-size:14px;color:#333">3</div>
<div class="r" style="left:794px;top:611px;width:1px;height:26px;background:#dcdcdc;"></div>
<div class="t" style="left:794px;width:33px;text-align:center;top:616.15px;font-size:14px;color:#333">4</div>
<div class="r" style="left:827px;top:611px;width:1px;height:26px;background:#dcdcdc;"></div>
<div class="t" style="left:827px;width:33px;text-align:center;top:616.15px;font-size:14px;color:#333">5</div>
<div class="r" style="left:860px;top:611px;width:1px;height:26px;background:#dcdcdc;"></div>
<div class="t" style="left:860px;width:30px;text-align:center;top:617.84px;font-size:12px;color:#888">&rsaquo;</div>
<div class="r" style="left:891px;top:610px;width:127px;height:28px;border:1px solid #dcdcdc;border-radius:4px;box-sizing:border-box;background:#fff"></div>
<svg class="r" style="left:903px;top:619px" width="14" height="9" viewBox="0 0 14 9"><path d="M1.8 7.8 L7 2.5 L12.2 7.8" stroke="#333" stroke-width="1.6" fill="none"/></svg>
<div class="t" style="left:921px;top:616.15px;font-size:14px;color:#333;">0.113 Second</div>
<div class="r" style="left:1023px;top:108px;width:377px;height:535px;background:#fff;"></div>
<div class="r" style="left:1022px;top:108px;width:2px;height:535px;background:#ececec;"></div>
<svg class="r" style="left:1353px;top:111px" width="12" height="12" viewBox="0 0 12 12">
<rect x="0.5" y="0.5" width="11" height="11" fill="none" stroke="#333" stroke-width="1"/><rect x="0" y="8.5" width="12" height="3.5" fill="#333"/></svg>
<svg class="r" style="left:1377px;top:111px" width="12" height="12" viewBox="0 0 12 12">
<path d="M1.5 1.5 L10.5 10.5 M10.5 1.5 L1.5 10.5" stroke="#2a2a2a" stroke-width="3"/></svg>
<div class="r" style="left:1032px;top:142px;width:1px;height:6px;background:repeating-linear-gradient(#aaa 0 1px,transparent 1px 2px)"></div>
<div class="t" style="left:1044px;top:145.15px;font-size:14px;color:#444;">Network Properties</div>
<div class="r" style="left:1037px;top:153px;width:6px;height:1px;background:repeating-linear-gradient(90deg,#aaa 0 1px,transparent 1px 2px)"></div>
<div class="t" style="left:1065px;top:166.97px;font-size:11.5px;color:#333;font-weight:bold;">Interface</div>
<div class="r" style="left:1054px;top:173px;width:9px;height:1px;background:repeating-linear-gradient(90deg,#aaa 0 1px,transparent 1px 2px)"></div>
<div class="t" style="left:1245px;top:166.54px;font-size:12px;color:#333;">To-HQ-MPLS</div>
<div class="t" style="left:1044px;top:185.15px;font-size:14px;color:#444;">Identity</div>
<div class="r" style="left:1037px;top:193px;width:6px;height:1px;background:repeating-linear-gradient(90deg,#aaa 0 1px,transparent 1px 2px)"></div>
<div class="t" style="left:1065px;top:206.97px;font-size:11.5px;color:#333;font-weight:bold;">Device ID</div>
<div class="r" style="left:1054px;top:213px;width:9px;height:1px;background:repeating-linear-gradient(90deg,#aaa 0 1px,transparent 1px 2px)"></div>
<div class="t" style="left:1245px;top:206.54px;font-size:12px;color:#333;">FGVM02TM20007339</div>
<div class="t" style="left:1065px;top:226.97px;font-size:11.5px;color:#333;font-weight:bold;">Device Name</div>
<div class="r" style="left:1054px;top:233px;width:9px;height:1px;background:repeating-linear-gradient(90deg,#aaa 0 1px,transparent 1px 2px)"></div>
<div class="t" style="left:1245px;top:226.54px;font-size:12px;color:#333;">Branch_Office_01</div>
<div class="t" style="left:1044px;top:245.15px;font-size:14px;color:#444;">Type</div>
<div class="r" style="left:1037px;top:253px;width:6px;height:1px;background:repeating-linear-gradient(90deg,#aaa 0 1px,transparent 1px 2px)"></div>
<div class="t" style="left:1065px;top:266.97px;font-size:11.5px;color:#333;font-weight:bold;">Sub Type</div>
<div class="r" style="left:1054px;top:273px;width:9px;height:1px;background:repeating-linear-gradient(90deg,#aaa 0 1px,transparent 1px 2px)"></div>
<div class="t" style="left:1245px;top:266.54px;font-size:12px;color:#333;">sdwan</div>
<div class="t" style="left:1065px;top:286.97px;font-size:11.5px;color:#333;font-weight:bold;">Type</div>
<div class="r" style="left:1054px;top:293px;width:9px;height:1px;background:repeating-linear-gradient(90deg,#aaa 0 1px,transparent 1px 2px)"></div>
<div class="t" style="left:1245px;top:286.54px;font-size:12px;color:#333;">event</div>
<div class="t" style="left:1044px;top:305.15px;font-size:14px;color:#444;">Alerts</div>
<div class="r" style="left:1037px;top:313px;width:6px;height:1px;background:repeating-linear-gradient(90deg,#aaa 0 1px,transparent 1px 2px)"></div>
<div class="t" style="left:1065px;top:326.97px;font-size:11.5px;color:#333;font-weight:bold;">Level</div>
<div class="r" style="left:1054px;top:333px;width:9px;height:1px;background:repeating-linear-gradient(90deg,#aaa 0 1px,transparent 1px 2px)"></div>
<div class="t" style="left:1044px;top:344.65px;font-size:14px;color:#444;">General</div>
<div class="r" style="left:1037px;top:352.5px;width:6px;height:1px;background:repeating-linear-gradient(90deg,#aaa 0 1px,transparent 1px 2px)"></div>
<div class="t" style="left:1065px;top:367.47px;font-size:11.5px;color:#333;font-weight:bold;">Log Description</div>
<div class="r" style="left:1054px;top:373.5px;width:9px;height:1px;background:repeating-linear-gradient(90deg,#aaa 0 1px,transparent 1px 2px)"></div>
<div class="t" style="left:1245px;top:367.04px;font-size:12px;color:#333;">Virtual WAN Link SLA infor</div>
<div class="t" style="left:1245px;top:384.04px;font-size:12px;color:#333;">mation</div>
<div class="t" style="left:1065px;top:402.47px;font-size:11.5px;color:#333;font-weight:bold;">Log ID</div>
<div class="r" style="left:1054px;top:408.5px;width:9px;height:1px;background:repeating-linear-gradient(90deg,#aaa 0 1px,transparent 1px 2px)"></div>
<div class="t" style="left:1245px;top:402.04px;font-size:12px;color:#333;">0113022925</div>
<div class="t" style="left:1065px;top:421.97px;font-size:11.5px;color:#333;font-weight:bold;">Message</div>
<div class="r" style="left:1054px;top:428px;width:9px;height:1px;background:repeating-linear-gradient(90deg,#aaa 0 1px,transparent 1px 2px)"></div>
<div class="t" style="left:1245px;top:421.54px;font-size:12px;color:#333;">Health Check SLA status. S</div>
<div class="t" style="left:1245px;top:438.54px;font-size:12px;color:#333;">LA failed due to being over</div>
<div class="t" style="left:1245px;top:455.54px;font-size:12px;color:#333;">the performance metric thr</div>
<div class="t" style="left:1245px;top:472.54px;font-size:12px;color:#333;">eshold.</div>
<div class="t" style="left:1065px;top:491.97px;font-size:11.5px;color:#333;font-weight:bold;">Status</div>
<div class="r" style="left:1054px;top:498px;width:9px;height:1px;background:repeating-linear-gradient(90deg,#aaa 0 1px,transparent 1px 2px)"></div>
<div class="t" style="left:1245px;top:491.54px;font-size:12px;color:#333;">&nbsp;down</div>
<div class="t" style="left:1065px;top:511.97px;font-size:11.5px;color:#333;font-weight:bold;">Virtual Domain</div>
<div class="r" style="left:1054px;top:518px;width:9px;height:1px;background:repeating-linear-gradient(90deg,#aaa 0 1px,transparent 1px 2px)"></div>
<div class="t" style="left:1245px;top:511.54px;font-size:12px;color:#333;">root</div>
<div class="t" style="left:1044px;top:530.15px;font-size:14px;color:#444;">Others</div>
<div class="r" style="left:1037px;top:538px;width:6px;height:1px;background:repeating-linear-gradient(90deg,#aaa 0 1px,transparent 1px 2px)"></div>
<div class="r" style="left:1032px;top:159px;width:1px;height:89px;background:repeating-linear-gradient(#aaa 0 1px,transparent 1px 2px)"></div>
<div class="r" style="left:1032px;top:259px;width:1px;height:49px;background:repeating-linear-gradient(#aaa 0 1px,transparent 1px 2px)"></div>
<div class="r" style="left:1032px;top:319px;width:1px;height:29px;background:repeating-linear-gradient(#aaa 0 1px,transparent 1px 2px)"></div>
<div class="r" style="left:1032px;top:359px;width:1px;height:22px;background:repeating-linear-gradient(#aaa 0 1px,transparent 1px 2px)"></div>
<div class="r" style="left:1032px;top:399px;width:1px;height:39px;background:repeating-linear-gradient(#aaa 0 1px,transparent 1px 2px)"></div>
<div class="r" style="left:1032px;top:489px;width:1px;height:44px;background:repeating-linear-gradient(#aaa 0 1px,transparent 1px 2px)"></div>
<div class="r" style="left:1053px;top:164px;width:1px;height:10px;background:repeating-linear-gradient(#aaa 0 1px,transparent 1px 2px)"></div>
<div class="r" style="left:1053px;top:204px;width:1px;height:30px;background:repeating-linear-gradient(#aaa 0 1px,transparent 1px 2px)"></div>
<div class="r" style="left:1053px;top:264px;width:1px;height:30px;background:repeating-linear-gradient(#aaa 0 1px,transparent 1px 2px)"></div>
<div class="r" style="left:1053px;top:324px;width:1px;height:10px;background:repeating-linear-gradient(#aaa 0 1px,transparent 1px 2px)"></div>
<div class="r" style="left:1053px;top:363px;width:1px;height:11px;background:repeating-linear-gradient(#aaa 0 1px,transparent 1px 2px)"></div>
<div class="r" style="left:1053px;top:399px;width:1px;height:30px;background:repeating-linear-gradient(#aaa 0 1px,transparent 1px 2px)"></div>
<div class="r" style="left:1053px;top:489px;width:1px;height:30px;background:repeating-linear-gradient(#aaa 0 1px,transparent 1px 2px)"></div>
<div class="r" style="left:1026px;top:148px;width:9px;height:9px;border:1px solid #b5b5b5;border-radius:2px;background:linear-gradient(#fff,#ececec)"></div>
<div class="r" style="left:1029px;top:153px;width:5px;height:1px;background:#000;"></div>
<div class="r" style="left:1026px;top:188px;width:9px;height:9px;border:1px solid #b5b5b5;border-radius:2px;background:linear-gradient(#fff,#ececec)"></div>
<div class="r" style="left:1029px;top:193px;width:5px;height:1px;background:#000;"></div>
<div class="r" style="left:1026px;top:248px;width:9px;height:9px;border:1px solid #b5b5b5;border-radius:2px;background:linear-gradient(#fff,#ececec)"></div>
<div class="r" style="left:1029px;top:253px;width:5px;height:1px;background:#000;"></div>
<div class="r" style="left:1026px;top:308px;width:9px;height:9px;border:1px solid #b5b5b5;border-radius:2px;background:linear-gradient(#fff,#ececec)"></div>
<div class="r" style="left:1029px;top:313px;width:5px;height:1px;background:#000;"></div>
<div class="r" style="left:1026px;top:348px;width:9px;height:9px;border:1px solid #b5b5b5;border-radius:2px;background:linear-gradient(#fff,#ececec)"></div>
<div class="r" style="left:1029px;top:353px;width:5px;height:1px;background:#000;"></div>
<div class="r" style="left:1026px;top:533px;width:9px;height:9px;border:1px solid #b5b5b5;border-radius:2px;background:linear-gradient(#fff,#ececec)"></div>
<div class="r" style="left:1029px;top:538px;width:5px;height:1px;background:#000;"></div>
<div class="r" style="left:1031px;top:536px;width:1px;height:5px;background:#000;"></div>
<div class="r" style="left:1245px;top:325px;width:80px;height:16px;background:#dbfcfc;border-radius:3px;"></div>
<div class="t" style="left:1245px;width:80px;text-align:center;top:327.57px;font-size:11.5px;color:#333">notice</div>
<div class="r" style="left:240px;top:641px;width:1160px;height:2px;background:#f2f2f2;"></div>
</body></html>
